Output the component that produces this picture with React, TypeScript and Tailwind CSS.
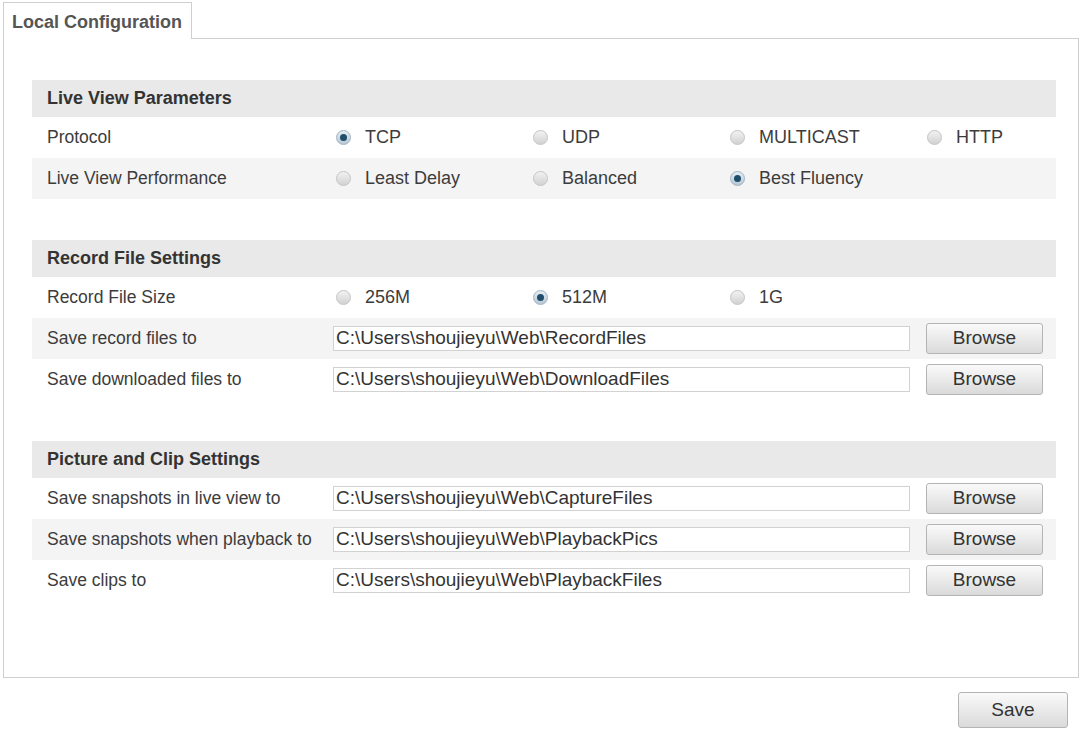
import React from "react";

type RadioRow = { label: string; options: string[]; checked: number };
type PathRow = { label: string; value: string };

const liveView: RadioRow[] = [
  { label: "Protocol", options: ["TCP", "UDP", "MULTICAST", "HTTP"], checked: 0 },
  { label: "Live View Performance", options: ["Least Delay", "Balanced", "Best Fluency"], checked: 2 },
];

const recordSize: RadioRow = { label: "Record File Size", options: ["256M", "512M", "1G"], checked: 1 };

const recordPaths: PathRow[] = [
  { label: "Save record files to", value: "C:\\Users\\shoujieyu\\Web\\RecordFiles" },
  { label: "Save downloaded files to", value: "C:\\Users\\shoujieyu\\Web\\DownloadFiles" },
];

const picturePaths: PathRow[] = [
  { label: "Save snapshots in live view to", value: "C:\\Users\\shoujieyu\\Web\\CaptureFiles" },
  { label: "Save snapshots when playback to", value: "C:\\Users\\shoujieyu\\Web\\PlaybackPics" },
  { label: "Save clips to", value: "C:\\Users\\shoujieyu\\Web\\PlaybackFiles" },
];

function Radio({ on }: { on: boolean }) {
  return (
    <span
      className={
        "flex h-[15px] w-[15px] shrink-0 items-center justify-center rounded-full border " +
        (on
          ? "border-[#9fb3c2] bg-gradient-to-b from-[#e4edf3] to-[#b8c8d4]"
          : "border-[#c4c4c4] bg-gradient-to-b from-[#f2f2f2] to-[#d2d2d2]")
      }
    >
      {on && <span className="h-[7px] w-[7px] rounded-full bg-[#1f4d6b]" />}
    </span>
  );
}

function Row({ label, alt, children }: { label: string; alt: boolean; children: React.ReactNode }) {
  return (
    <div className={"flex h-[41px] items-center " + (alt ? "bg-[#f4f4f4]" : "bg-white")}>
      <div className="w-[301px] shrink-0 pl-[15px] text-[17.5px] text-[#3c3c3c]">{label}</div>
      <div className="flex flex-1 items-center">{children}</div>
    </div>
  );
}

function RadioLine({ row, alt }: { row: RadioRow; alt: boolean }) {
  return (
    <Row label={row.label} alt={alt}>
      {row.options.map((opt, i) => (
        <label key={opt} className="flex w-[197px] items-center gap-[14px] pl-[3px] text-[18px] text-[#3c3c3c]">
          <Radio on={i === row.checked} />
          {opt}
        </label>
      ))}
    </Row>
  );
}

function BrowseButton() {
  return (
    <button className="h-[31px] w-[117px] rounded-[3px] border border-[#b4b4b4] bg-gradient-to-b from-[#fafafa] to-[#dadada] text-[19px] text-[#333]">
      Browse
    </button>
  );
}

function PathLine({ row, alt }: { row: PathRow; alt: boolean }) {
  return (
    <Row label={row.label} alt={alt}>
      <div className="flex h-[25px] w-[577px] items-center border border-[#d2d2d2] bg-white pl-[2px] text-[19px] text-[#333]">
        {row.value}
      </div>
      <div className="ml-[16px]">
        <BrowseButton />
      </div>
    </Row>
  );
}

function Section({ title, children }: { title: string; children: React.ReactNode }) {
  return (
    <div>
      <div className="flex h-[37px] items-center bg-[#e9e9e9] pl-[15px] text-[18px] font-bold text-[#333]">
        {title}
      </div>
      {children}
    </div>
  );
}

export default function App() {
  return (
    <div className="min-h-screen bg-white px-[3px] pt-[2px] font-['Liberation_Sans',Arial,sans-serif]">
      {/* tab strip */}
      <div className="flex">
        <div className="relative z-10 -mb-px flex h-[37px] w-[189px] items-center border border-b-0 border-[#cfcfcf] bg-white pl-[8px] pt-[3px] text-[18px] font-bold text-[#555]">
          Local Configuration
        </div>
      </div>

      <div className="w-[1076px] border border-[#cfcfcf] px-[28px] pb-[76px] pt-[41px]">
        <div className="flex w-[1024px] flex-col gap-[41px]">
          <Section title="Live View Parameters">
            {liveView.map((row, i) => (
              <RadioLine key={row.label} row={row} alt={i % 2 === 1} />
            ))}
          </Section>

          <Section title="Record File Settings">
            <RadioLine row={recordSize} alt={false} />
            {recordPaths.map((row, i) => (
              <PathLine key={row.label} row={row} alt={i % 2 === 0} />
            ))}
          </Section>

          <Section title="Picture and Clip Settings">
            {picturePaths.map((row, i) => (
              <PathLine key={row.label} row={row} alt={i % 2 === 1} />
            ))}
          </Section>
        </div>
      </div>

      <div className="flex justify-end pr-[13px] pt-[14px]">
        <button className="h-[36px] w-[110px] rounded-[3px] border border-[#b4b4b4] bg-gradient-to-b from-[#fafafa] to-[#dadada] text-[19px] text-[#333]">
          Save
        </button>
      </div>
    </div>
  );
}
